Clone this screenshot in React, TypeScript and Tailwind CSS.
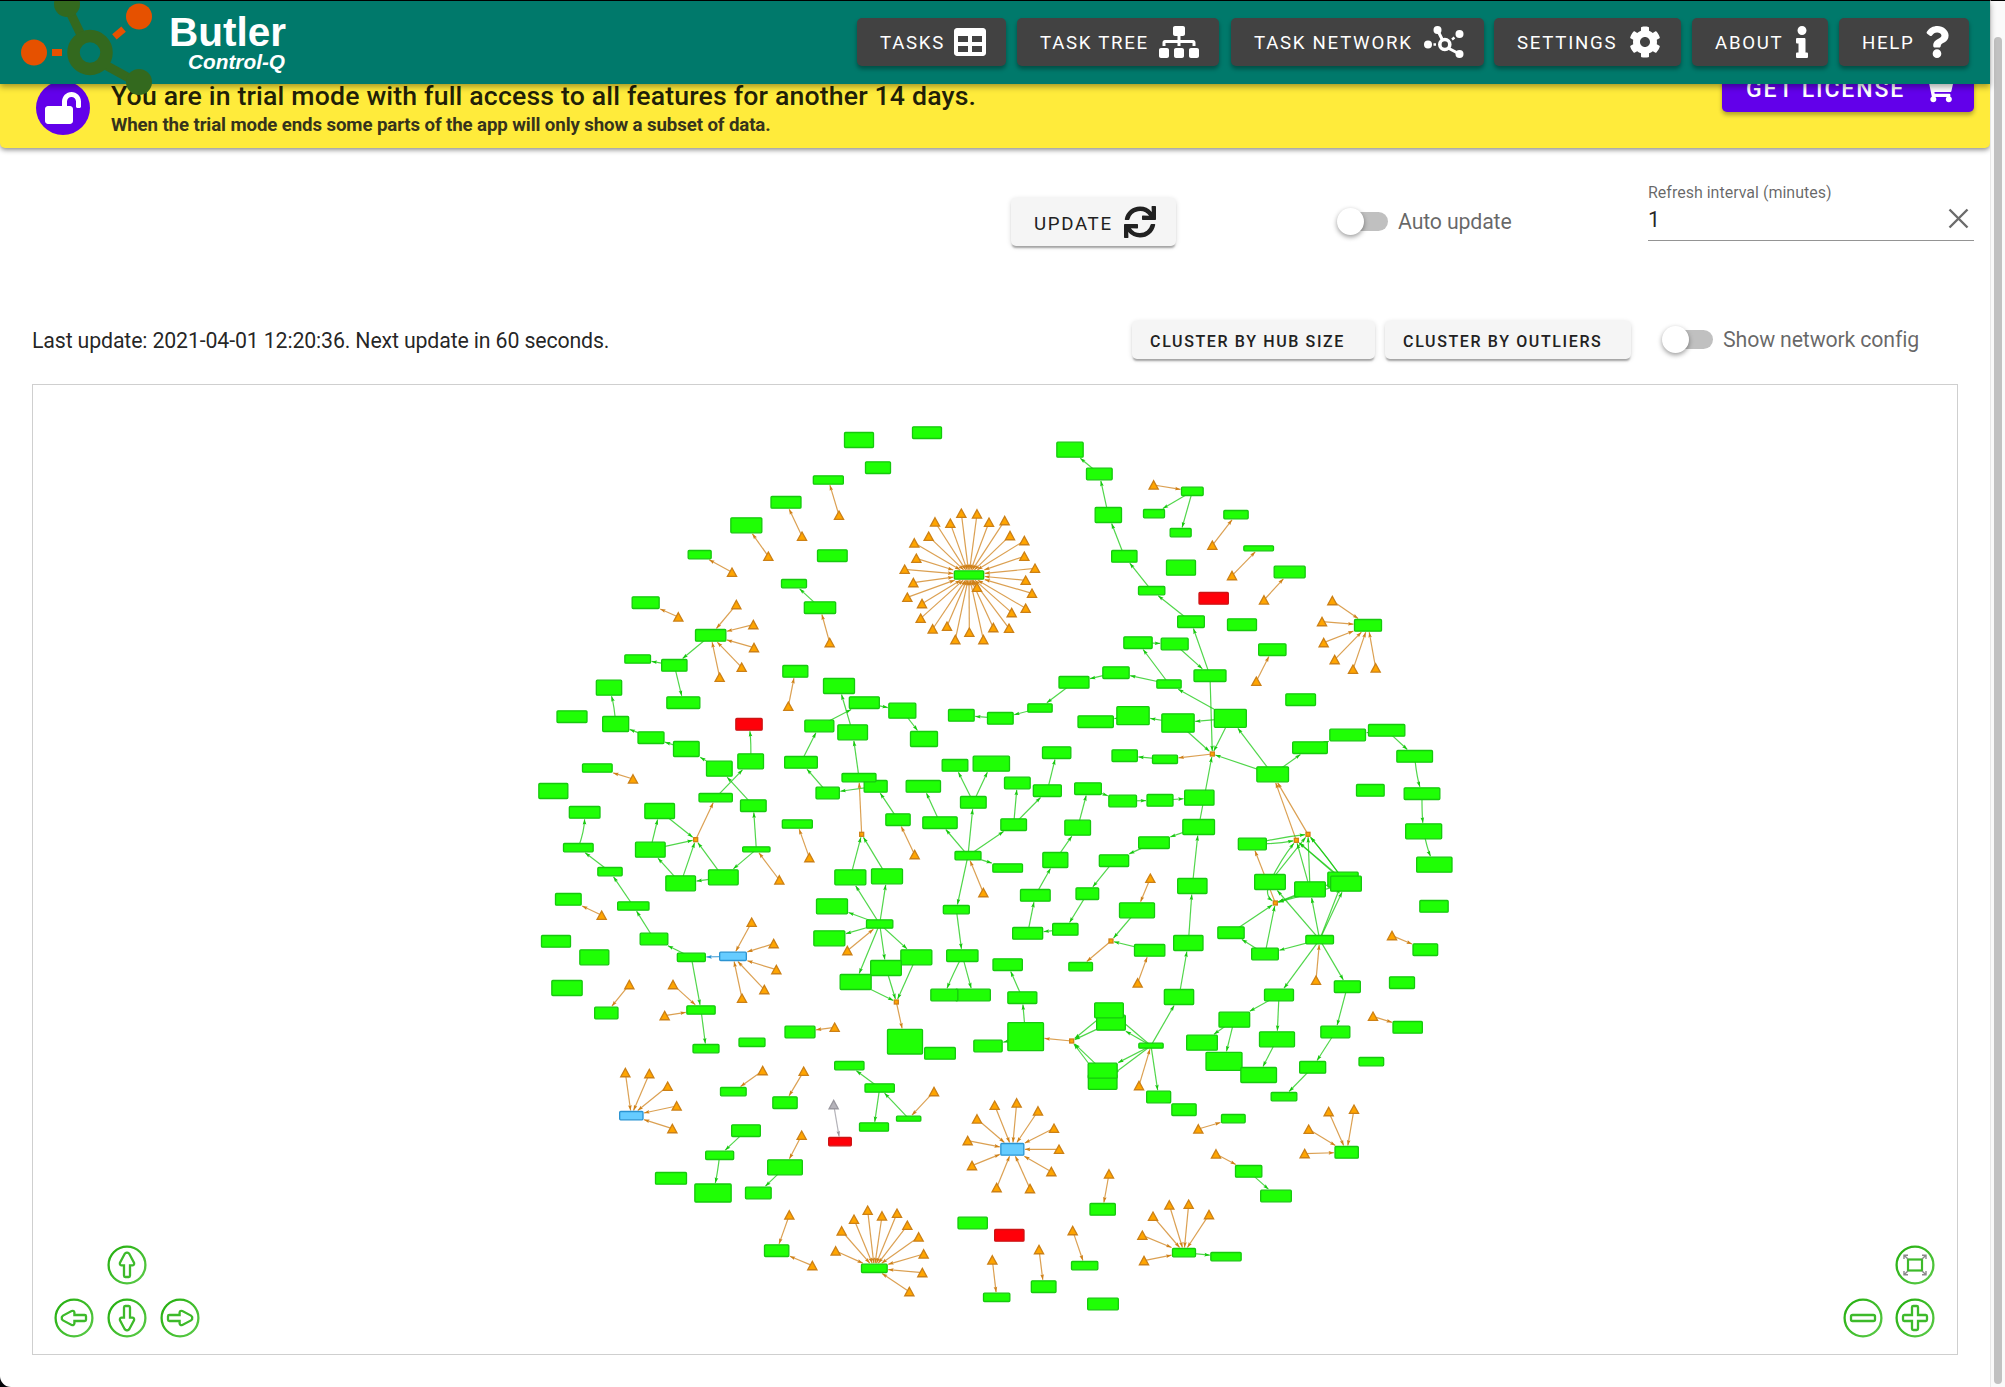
import React from "react";
import {
  FaTable,
  FaSitemap,
  FaCog,
  FaInfo,
  FaQuestion,
  FaSync,
  FaShoppingCart,
  FaLockOpen,
} from "react-icons/fa";

/* ---------- Task network data ----------
   The canvas is divided into tiles. Positions inside a tile are stored in
   thirds of a pixel, relative to the tile's own origin. */

type Kind = "ok" | "fail" | "link";
type Rect = [id: string, x: number, y: number, w: number, h: number, kind?: Kind];
type Trigger = [target: string, ...points: number[]];
interface Tile {
  ox: number;
  oy: number;
  rects: Rect[];
  joints?: [string, number, number][];
  triggers: Trigger[];
}

const TILES: Tile[] = [
  {
    ox: 520,
    oy: 400,
    rects: [
      ["a1", 1017, 120, 90, 48], ["a2", 1074, 203, 78, 38], ["a3", 925, 240, 93, 28], ["a4", 798, 307, 93, 38],
      ["a5", 679, 376, 96, 48], ["a6", 539, 464, 72, 28], ["a7", 937, 467, 92, 38], ["a8", 822, 551, 78, 28],
      ["a9", 900, 623, 97, 38], ["a10", 377, 608, 84, 38], ["a11", 572, 706, 94, 38], ["a12", 353, 777, 80, 28],
      ["a13", 463, 796, 79, 38], ["a14", 490, 908, 102, 38], ["a15", 267, 863, 79, 48], ["a16", 156, 950, 93, 38],
      ["a17", 287, 972, 81, 48], ["a18", 393, 1013, 81, 38], ["a19", 499, 1047, 80, 48],
      ["a20", 687, 973, 82, 38, "fail"], ["a21", 826, 814, 78, 38], ["a22", 957, 858, 96, 48],
      ["a23", 1033, 908, 93, 38], ["a24", 1147, 932, 84, 48], ["a25", 898, 978, 90, 38], ["a26", 998, 997, 92, 48],
    ],
    triggers: [
      ["a3", 957, 346], ["a4", 846, 409], ["a5", 745, 469], ["a6", 636, 517], ["a10", 475, 651], ["a9", 929, 728],
      ["a11", 649, 614, 700, 674, 702, 743, 665, 802, 599, 832], ["a21", 805, 919],
    ],
  },
  {
    ox: 880,
    oy: 400,
    rects: [
      ["b0", 141, 98, 90, 38], ["b1", 132, 1017, 84, 48], ["b2", 570, 149, 82, 48], ["b3", 658, 222, 80, 38],
      ["b4", 685, 345, 82, 48], ["b5", 733, 469, 79, 38], ["b6", 815, 572, 82, 28], ["b7", 933, 665, 83, 38],
      ["b8", 990, 827, 99, 38], ["b9", 774, 728, 88, 38], ["b10", 884, 732, 84, 38], ["b11", 867, 852, 76, 28],
      ["b12", 708, 818, 82, 38], ["b13", 582, 847, 93, 38], ["b14", 480, 924, 76, 28], ["b15", 361, 955, 80, 38],
      ["b16", 244, 946, 80, 38], ["b17", 647, 965, 109, 38], ["b18", 759, 947, 100, 57], ["b19", 894, 969, 100, 58],
      ["b20", 1051, 955, 99, 57], ["b21", 937, 274, 68, 28], ["b22", 822, 341, 66, 28], ["b23", 902, 398, 66, 28],
      ["b24", 1068, 344, 76, 28], ["b25", 1136, 445, 92, 18], ["b26", 903, 503, 90, 48],
      ["b27", 1001, 595, 91, 38, "fail"], ["b28", 1086, 674, 90, 38], ["b30", 267, 525, 91, 28],
    ],
    joints: [["j1", 997, 1062]],
    triggers: [
      ["b21", 821, 255], ["b24", 997, 436], ["b25", 1056, 527], ["c1", 1152, 600], ["c4", 1129, 844],
      ["b30", 244, 340, 291, 342, 165, 366, 211, 370, 327, 367, 374, 362, 146, 409, 390, 407, 103, 429, 433, 422,
        109, 475, 433, 469, 74, 508, 465, 505, 100, 548, 437, 541, 82, 592, 456, 580, 126, 611, 437, 625, 122, 655,
        395, 638, 158, 687, 201, 679, 340, 683, 387, 685, 226, 719, 268, 697, 310, 719, 291, 562],
    ],
  },
  {
    ox: 1080,
    oy: 420,
    rects: [
      ["c1", 629, 456, 96, 38], ["c2", 864, 616, 84, 38], ["c4", 577, 689, 85, 38], ["c5", 662, 839, 92, 38],
      ["c6", 690, 983, 107, 38], ["c7", 803, 945, 110, 38], ["c8", 920, 931, 112, 38], ["c9", 1004, 1009, 110, 38],
      ["c10", 578, 1063, 98, 48],
    ],
    triggers: [["c2", 757, 542, 726, 605, 731, 668, 764, 719, 819, 748, 887, 744]],
  },
  {
    ox: 520,
    oy: 740,
    rects: [
      ["d1", 598, 86, 80, 48], ["d2", 692, 64, 80, 48], ["d3", 587, 173, 103, 28], ["d4", 700, 197, 80, 38],
      ["d5", 419, 213, 92, 48], ["d6", 391, 329, 92, 48], ["d7", 482, 430, 92, 48], ["d8", 610, 412, 92, 48],
      ["d9", 709, 328, 85, 18], ["d10", 232, 84, 92, 28], ["d11", 100, 153, 90, 48], ["d12", 194, 217, 95, 38],
      ["d13", 175, 323, 92, 28], ["d14", 270, 395, 76, 28], ["d15", 340, 498, 97, 28], ["d16", 402, 597, 86, 38],
      ["d17", 514, 652, 87, 28], ["d18", 639, 649, 83, 28, "link"], ["d19", 543, 810, 88, 28],
      ["d20", 558, 926, 81, 28], ["d21", 145, 478, 80, 38], ["d22", 108, 604, 90, 38], ["d23", 223, 652, 90, 48],
      ["d24", 141, 744, 94, 48], ["d25", 259, 819, 73, 38], ["d26", 832, 252, 93, 28], ["d27", 843, 67, 101, 38],
      ["d28", 923, 159, 73, 38], ["d30", 1067, 139, 72, 38], ["d29", 1017, 113, 105, 28], ["d31", 1134, 239, 76, 38],
      ["d32", 991, 412, 96, 48], ["d33", 1101, 409, 96, 48], ["d34", 936, 499, 96, 48], ["d35", 928, 595, 96, 48],
      ["d36", 1079, 552, 82, 28], ["d37", 1189, 652, 96, 48], ["d38", 1098, 684, 95, 48], ["d39", 1007, 726, 96, 48],
      ["d40", 1155, 905, 108, 77], ["d41", 840, 876, 93, 38], ["d42", 696, 907, 81, 28], ["d43", 988, 977, 91, 28],
      ["d44", 1079, 1044, 91, 28], ["d45", 640, 1055, 80, 28],
    ],
    joints: [["jd1", 527, 299], ["jd2", 1025, 283], ["jd3", 1129, 786]],
    triggers: [
      ["d10", 339, 117], ["d26", 868, 353], ["d31", 1184, 344], ["d9", 778, 420], ["d21", 245, 526],
      ["d18", 695, 547, 761, 611, 769, 689, 733, 749, 666, 775], ["d25", 328, 734], ["d19", 459, 734, 434, 827],
      ["d41", 944, 862], ["d36", 982, 632], ["d45", 728, 992], ["g2", 851, 994],
    ],
  },
  {
    ox: 880,
    oy: 740,
    rects: [
      ["e0", 530, 38, 88, 38], ["e1", 225, 76, 80, 38], ["e2", 334, 71, 112, 48], ["e3", 130, 139, 106, 38],
      ["e4", 280, 187, 80, 38], ["e5", 412, 129, 80, 38], ["e6", 502, 152, 87, 38], ["e7", 180, 248, 106, 38],
      ["e8", 401, 254, 80, 38], ["e9", 264, 347, 81, 28], ["e10", 383, 384, 92, 28], ["e11", 229, 509, 81, 28],
      ["e12", 247, 647, 97, 38], ["e14", 279, 765, 107, 38], ["e13", 193, 765, 84, 38], ["e15", 383, 674, 91, 38],
      ["e16", 427, 773, 90, 38], ["e17", 437, 890, 110, 87], ["e18", 324, 918, 88, 38], ["e19", 180, 940, 95, 38],
      ["e20", 624, 146, 83, 38], ["e21", 728, 183, 86, 38], ["e22", 840, 181, 81, 38], ["e23", 958, 173, 91, 48],
      ["e24", 956, 261, 98, 48], ["e25", 822, 308, 95, 38], ["e26", 702, 362, 91, 38], ["e27", 622, 461, 71, 38],
      ["e28", 556, 568, 79, 38], ["e29", 443, 580, 93, 38], ["e30", 466, 466, 92, 38], ["e31", 526, 360, 78, 48],
      ["e32", 593, 263, 80, 48], ["e33", 937, 438, 91, 48], ["e34", 925, 609, 91, 48], ["e35", 897, 771, 91, 48],
      ["e36", 771, 511, 108, 48], ["e37", 809, 631, 94, 38], ["e38", 602, 680, 74, 28], ["e39", 693, 848, 89, 48],
      ["e40", 687, 811, 89, 48], ["e41", 668, 1026, 89, 47], ["e42", 668, 992, 90, 48], ["e43", 813, 917, 76, 18],
      ["e50", 734, 47, 79, 38], ["e51", 855, 58, 78, 28],
    ],
    joints: [["je1", 693, 603], ["je2", 575, 903]],
    triggers: [["e9", 310, 458], ["e36", 811, 415], ["e37", 773, 729], ["e43", 777, 1037]],
  },
  {
    ox: 1160,
    oy: 740,
    rects: [
      ["f2", 786, 161, 110, 38], ["f3", 791, 274, 111, 48], ["f4", 823, 374, 109, 48], ["f5", 822, 499, 88, 38],
      ["f6", 631, 151, 86, 38], ["f7", 277, 312, 87, 38], ["f8", 330, 426, 95, 48], ["f9", 450, 448, 95, 48],
      ["f10", 549, 419, 94, 48], ["f11", 558, 431, 95, 48], ["f12", 213, 578, 82, 38], ["f13", 315, 642, 83, 38],
      ["f14", 479, 599, 86, 28], ["f15", 357, 765, 90, 38], ["f16", 562, 740, 81, 38], ["f17", 223, 839, 95, 48],
      ["f18", 126, 908, 95, 48], ["f19", 192, 964, 111, 57], ["f20", 351, 898, 108, 48], ["f21", 296, 1005, 110, 48],
      ["f22", 526, 876, 90, 38], ["f23", 458, 982, 81, 38], ["f24", 372, 1070, 80, 28], ["f25", 796, 629, 77, 38],
      ["f26", 726, 728, 78, 38], ["f27", 743, 862, 91, 38], ["f28", 634, 965, 77, 28],
    ],
    joints: [["jf1", 409, 301], ["jf2", 444, 283], ["jf3", 346, 489]],
    triggers: [["f25", 696, 587], ["f27", 639, 829], ["f14", 468, 721]],
  },
  {
    ox: 540,
    oy: 1040,
    rects: [
      ["g1", 274, 227, 73, 28, "link"], ["g2", 735, 188, 76, 38], ["g3", 618, 272, 89, 38], ["g4", 539, 346, 87, 28],
      ["g5", 519, 459, 112, 57], ["g6", 393, 415, 96, 38], ["g7", 735, 382, 107, 48], ["g8", 655, 459, 80, 38],
      ["g9", 900, 305, 71, 28, "fail"], ["g10", 1002, 261, 90, 28], ["g11", 1106, 236, 76, 18],
      ["g12", 710, 632, 76, 38], ["g13", 1003, 685, 80, 28], ["g14", 1298, 549, 91, 38],
    ],
    triggers: [
      ["g1", 256, 98, 328, 101, 383, 139, 410, 198, 397, 266], ["g7", 785, 286], ["g11", 1182, 155],
      ["g12", 748, 525, 817, 677], ["g9", 881, 194],
      ["g13", 887, 633, 905, 573, 942, 538, 983, 511, 1026, 528, 1071, 520, 1102, 556, 1136, 591, 1151, 642, 1147, 698,
        1108, 755],
    ],
  },
  {
    ox: 940,
    oy: 1040,
    rects: [
      ["h1", 656, 171, 75, 38], ["h2", 732, 209, 76, 38], ["h3", 217, 328, 72, 38, "link"],
      ["h5", 208, 586, 91, 38, "fail"], ["h6", 170, 772, 82, 28], ["h7", 311, 740, 77, 38], ["h8", 434, 677, 82, 28],
      ["h9", 488, 508, 79, 38], ["h10", 489, 792, 95, 38], ["h11", 732, 638, 72, 28], ["h12", 858, 650, 94, 28],
      ["h13", 880, 236, 74, 28], ["h14", 926, 394, 82, 38], ["h15", 1008, 468, 95, 38], ["h16", 1220, 337, 73, 38],
    ],
    triggers: [
      ["h3", 164, 196, 230, 189, 294, 213, 111, 237, 342, 265, 83, 302, 357, 328, 96, 377, 334, 395, 170, 443, 270,
        446],
      ["h6", 157, 660], ["h7", 297, 629], ["h8", 398, 572], ["h9", 507, 402],
      ["h11", 639, 529, 688, 495, 746, 493, 807, 524, 607, 586, 612, 662], ["h13", 775, 267], ["h14", 828, 342],
      ["h16", 1166, 215, 1242, 208, 1106, 268, 1094, 341],
    ],
  },
];

const LINKS = `
a9>a8 a11>a13 a13>a12 a13>a14 a17>a15 a18>a17 a19>a18 d1>a19 d2>a20 a25>a23 a23>a24 a24>b1 a26>a22 d27>a25 d29>a26
b3>b2 b4>b3 b5>b4 b6>b5 b7>b6 b8>b7 b9>b10 b10>b8 b11>b9 b11>b12 b12>b13 b13>b14 b14>b15 b15>b16 b20>b11 b20>b19
b19>b18 b18>b17 b20>j1 b19>j1 b8>j1 b21>b22 b21>b23 j1>e51 e51>e50 c10>b20 c10>j1 c10>c6 c6>c7 c8>c7 c8>c9 c9>f2
d4>d1 d3>d2 jd1>d3 d5>jd1 d6>jd1 d7>jd1 d8>jd1 d6>d5 d7>d6 d8>d7 d9>d8 d9>d4 d13>d12 d14>d13 d15>d14 d16>d15 d17>d16
d18>d17 d17>d19 d19>d20 d28>d27 d30>d28 d31>d30 jd2>d29 d32>jd2 d33>jd2 d36>d32 d36>d33 d36>d34 d36>d35 d36>d37
d36>d38 d36>d39 d37>jd3 d38>jd3 d39>jd3 jd3>d40 d44>d43 d44>g10 g11>d44
e4>e1 e4>e2 e7>e3 e8>e5 e8>e6 e6>e0 e9>e4 e9>e7 e9>e8 e9>e10 e9>e11 e11>e12 e12>e13 e12>e14 e16>e15 e17>e16 e17>e18
e20>e21 e21>e22 e22>e23 e24>j1 e24>e25 e25>e26 e26>e27 e27>e28 e28>e29 e29>e30 e30>e31 e31>e32 e32>e20 e33>e24
e34>e33 e35>e34 e43>e35 e36>je1 e37>je1 je1>e38 e40>je2 e39>je2 e41>je2 e42>je2 je2>e17 e43>e39 e43>e40 e43>e41
e43>e42 e43>h1 h1>h2
f2>f3 f3>f4 jf1>c10 jf2>c10 jf3>f7 f7>jf1 f7>jf2 f8>jf1 f8>jf2 f9>jf1 f9>jf2 f10>jf1 f10>jf2 f11>jf1 f11>jf2
f9>jf3 f10>jf3 f11>jf3 f12>jf3 f13>jf3 f8>jf3 f13>f12 f14>f13 f14>f8 f14>f9 f14>f10 f14>f11 f14>f15 f14>f16 f15>f17
f15>f20 f17>f18 f17>f19 f20>f21 f16>f22 f22>f23 f23>f24 g3>g4 g4>g5 g7>g8 h14>h15 h11>h12`
  .trim()
  .split(/\s+/)
  .map((l) => l.split(">"));

/* Sideways bend of the edges that are not straight, in pixels. */
const BENDS: Record<string, number> = {
  "d2>a20": 1.5,
  "d13>d12": 3,
  "a17>a15": 2,
  "c9>f2": 2,
  "f2>f3": 1,
  "f3>f4": 2,
  "e12>e13": 1,
  "f8>jf3": 9,
  "f8>jf1": -3,
  "f7>jf2": -2,
  "f7>jf1": 2,
  "f10>jf2": 1.5,
  "f11>jf2": 1.5,
  "g4>g5": -1,
};

interface Box {
  x: number;
  y: number;
  w: number;
  h: number;
  kind: Kind | "joint";
}
interface Tri {
  x: number;
  y: number;
  target: string;
}

const boxes: Record<string, Box> = {};
const tris: Tri[] = [];
TILES.forEach((t) => {
  t.rects.forEach(([id, x, y, w, h, kind]) => {
    boxes[id] = { x: t.ox + x / 3, y: t.oy + y / 3, w: w / 3, h: h / 3, kind: kind ?? "ok" };
  });
  t.joints?.forEach(([id, x, y]) => {
    boxes[id] = { x: t.ox + x / 3, y: t.oy + y / 3, w: 5, h: 5, kind: "joint" };
  });
  t.triggers.forEach(([target, ...p]) => {
    for (let i = 0; i < p.length; i += 2) {
      tris.push({ target, x: t.ox + p[i] / 3, y: t.oy + p[i + 1] / 3 });
    }
  });
});

const FILL = { ok: "#1fff05", fail: "#ff0009", link: "#66ccff", joint: "#ffa500" };
const LINE = { ok: "#16c80e", fail: "#cc1414", link: "#2b93d1", joint: "#cf8018" };

function Edge({ sx, sy, to, color, bend = 0 }: { sx: number; sy: number; to: Box; color: string; bend?: number }) {
  const len = Math.hypot(sx - to.x, sy - to.y) || 1;
  const mx = (sx + to.x) / 2 + ((to.y - sy) / len) * -bend;
  const my = (sy + to.y) / 2 + ((to.x - sx) / len) * bend;
  const cx = bend ? mx : sx;
  const cy = bend ? my : sy;
  const dx = cx - to.x;
  const dy = cy - to.y;
  const k = Math.min(
    dx ? (to.w / 2 + 0.5) / Math.abs(dx) : Infinity,
    dy ? (to.h / 2 + 0.5) / Math.abs(dy) : Infinity,
  );
  const tx = to.x + dx * k;
  const ty = to.y + dy * k;
  const a = (Math.atan2(-dy, -dx) * 180) / Math.PI;
  return (
    <g>
      <path
        d={bend ? `M${sx} ${sy}Q${mx} ${my} ${tx} ${ty}` : `M${sx} ${sy}L${tx} ${ty}`}
        stroke={color}
        strokeOpacity={0.75}
        strokeWidth={1.2}
        fill="none"
      />
      <path d="M0 0L-5.4 -1.8L-4.5 0L-5.4 1.8Z" fill={color} transform={`translate(${tx} ${ty}) rotate(${a})`} />
    </g>
  );
}

function NetworkGraph() {
  return (
    <svg className="block" width={1924} height={968} viewBox="33 385 1924 968">
      {LINKS.map(([s, t]) => (
        <Edge
          key={s + t}
          sx={boxes[s].x}
          sy={boxes[s].y}
          to={boxes[t]}
          color={LINE[boxes[s].kind]}
          bend={BENDS[`${s}>${t}`]}
        />
      ))}
      {tris.map((t, i) => (
        <Edge key={i} sx={t.x} sy={t.y} to={boxes[t.target]} color={t.target === "g9" ? "#9a98a0" : LINE.joint} />
      ))}
      {Object.entries(boxes).map(([id, b]) => (
        <rect
          key={id}
          x={b.x - b.w / 2 + 0.5}
          y={b.y - b.h / 2 + 0.5}
          width={b.w - 1}
          height={b.h - 1}
          rx={b.kind === "joint" ? 0 : 1}
          fill={FILL[b.kind]}
          stroke={LINE[b.kind]}
          strokeWidth={1.3}
        />
      ))}
      {tris.map((t, i) => (
        <path
          key={i}
          d={`M${t.x} ${t.y - 4.3}L${t.x + 4.6} ${t.y + 4.1}H${t.x - 4.6}Z`}
          fill={t.target === "g9" ? "#b5b3ba" : "#ffa500"}
          stroke={t.target === "g9" ? "#9a98a0" : "#cc8016"}
          strokeWidth={1.3}
        />
      ))}
    </svg>
  );
}

/* ---------- Chrome ---------- */

function ButlerLogo() {
  return (
    <svg className="absolute left-0 top-0" width={160} height={98} viewBox="0 0 160 98">
      <g stroke="#33691e" fill="none">
        <path d="M67 5L83 38" strokeWidth={9} />
        <path d="M98 60L138 82" strokeWidth={9} />
        <circle cx={90} cy={51.5} r={16.5} strokeWidth={12.5} />
      </g>
      <circle cx={67} cy={3} r={13} fill="#33691e" />
      <circle cx={139} cy={81} r={13} fill="#33691e" />
      <g fill="#e65100">
        <circle cx={34} cy={51.5} r={13} />
        <circle cx={139} cy={15.5} r={13} />
        <rect x={52} y={48} width={10} height={7} />
        <rect x={-6} y={-3.5} width={12} height={7} transform="translate(119 32) rotate(-40)" />
      </g>
    </svg>
  );
}

function HubIcon() {
  return (
    <svg width={40} height={32} viewBox="0 0 40 32" fill="#fff" stroke="#fff">
      <g stroke="none">
        <circle cx={4} cy={18.5} r={4} />
        <circle cx={13.5} cy={4} r={4} />
        <circle cx={35.5} cy={8} r={4} />
        <circle cx={35.5} cy={28} r={4} />
      </g>
      <path d="M13.5 4L18.5 14M24 22L35.5 28" strokeWidth={3} />
      <path d="M9.5 18.5H12M28 13.5L30.5 11.5" strokeWidth={2.4} />
      <circle cx={20.8} cy={18.5} r={5} strokeWidth={3.6} fill="none" />
    </svg>
  );
}

function NavButton({ label, width, children }: { label: string; width: string; children: React.ReactNode }) {
  return (
    <button
      className={`flex h-12 items-center justify-between rounded-[5px] bg-[#424242] pl-[23px] pr-5 text-[18.67px] tracking-[1.72px] text-white shadow-[0_3px_4px_rgba(0,0,0,0.35)] ${width}`}
    >
      <span className="whitespace-nowrap pt-[2px]">{label}</span>
      {children}
    </button>
  );
}

function Header() {
  return (
    <header className="relative z-10 h-[84px] border-t border-black bg-[#00796b] shadow-[0_3px_6px_rgba(0,0,0,0.35)]">
      <div className="flex items-start justify-between pr-[21px]">
        <div className="relative h-[83px] w-[290px]">
          <div className="absolute left-0 top-0 h-[98px] w-40 overflow-hidden">
            <ButlerLogo />
          </div>
          <div className="ml-[169px] pt-[8px] font-['Liberation_Sans'] font-bold text-white">
            <div className="text-[40.5px] leading-[46px]">Butler</div>
            <div className="-mt-[5px] ml-[19px] text-[20.8px] italic leading-[24px]">Control-Q</div>
          </div>
        </div>
        <nav className="flex pt-[17px]">
          <NavButton label="TASKS" width="w-[149px] mr-[11px]"><FaTable size={32} /></NavButton>
          <NavButton label="TASK TREE" width="w-[202px] mr-[12px]"><FaSitemap size={32} className="w-10" /></NavButton>
          <NavButton label="TASK NETWORK" width="w-[253px] mr-[10px]"><HubIcon /></NavButton>
          <NavButton label="SETTINGS" width="w-[187px] mr-[11px]"><FaCog size={32} /></NavButton>
          <NavButton label="ABOUT" width="w-[136px] mr-[11px]"><FaInfo size={32} className="w-3" /></NavButton>
          <NavButton label="HELP" width="w-[130px]"><FaQuestion size={32} className="w-6" /></NavButton>
        </nav>
      </div>
    </header>
  );
}

function TrialBanner() {
  return (
    <section className="-mt-6 flex h-[88px] rounded-[5px] bg-[#ffeb3b] pl-[36px] pr-4 shadow-[0_2px_5px_rgba(0,0,0,0.45)]">
      <div className="mt-[21px] flex size-[54px] items-center justify-center rounded-full bg-[#6200ea] text-white">
        <FaLockOpen size={32} className="w-9" />
      </div>
      <div className="ml-[21px] pt-[20px] whitespace-nowrap">
        <div className="text-[26.67px] font-medium leading-[32px] text-[#211f08] tracking-[0.16px]">
          You are in trial mode with full access to all features for another 14 days.
        </div>
        <div className="mt-[1px] text-[18.67px] font-bold leading-[24px] text-[#36331b] tracking-[-0.11px]">
          When the trial mode ends some parts of the app will only show a subset of data.
        </div>
      </div>
      <button className="ml-auto flex h-[52px] w-[252px] items-end justify-between rounded-[5px] bg-[#6200ea] pb-[8px] pl-6 pr-[20px] text-[23px] font-medium tracking-[1.9px] text-white shadow-[0_3px_4px_rgba(0,0,0,0.3)]">
        <span className="leading-[29px]">GET LICENSE</span>
        <FaShoppingCart size={31} />
      </button>
    </section>
  );
}

function Toggle({ label }: { label: string }) {
  return (
    <label className="flex items-center gap-[10px] text-[21.33px] text-black/60">
      <span className="relative flex h-[27px] w-[51px] items-center justify-end">
        <span className="h-[19px] w-[45px] rounded-full bg-[#c0c0c0]" />
        <span className="absolute left-0 top-0 size-[27px] rounded-full bg-white shadow-[0_2px_5px_rgba(0,0,0,0.4)]" />
      </span>
      <span className="whitespace-nowrap tracking-[-0.17px]">{label}</span>
    </label>
  );
}

const LIGHT_BUTTON =
  "flex items-center rounded-[5px] bg-[#f5f5f5] text-[#212121] whitespace-nowrap shadow-[0_3px_2px_-1px_rgba(0,0,0,0.3),0_1px_5px_rgba(0,0,0,0.15)]";

function Controls() {
  return (
    <>
      <div className="flex h-[148px] items-center justify-end pr-4">
        <button className={`${LIGHT_BUTTON} h-12 w-[165px] justify-between pl-[23px] pr-5 text-[18.67px] tracking-[1.667px]`}>
          <span className="pt-[3px]">UPDATE</span>
          <FaSync size={32} />
        </button>
        <div className="ml-[161px] w-[311px]">
          <Toggle label="Auto update" />
        </div>
        <div className="mb-[22px] mt-[2px] flex h-[58px] w-[326px] flex-col justify-between border-b border-[#949494]">
          <span className="text-base leading-[20px] text-black/60">Refresh interval (minutes)</span>
          <div className="flex items-center justify-between pb-[7px] pr-[5px]">
            <span className="text-[21.33px] leading-[26px] text-black/87">1</span>
            <svg className="-mt-[3px]" width={21} height={21} viewBox="0 0 21 21" stroke="#6b6b6b" strokeWidth={2.4}>
              <path d="M1.5 1.5L19.5 19.5M19.5 1.5L1.5 19.5" />
            </svg>
          </div>
        </div>
      </div>
      <div className="flex h-[88px] items-center pl-8 pr-[71px]">
        <p className="pt-[2px] text-[21.33px] tracking-[-0.155px] text-black/87">
          Last update: 2021-04-01 12:20:36. Next update in 60 seconds.
        </p>
        <button className={`${LIGHT_BUTTON} ml-auto h-[38px] w-[243px] pl-[18px] pt-[3px] text-base tracking-[1.63px] font-medium`}>
          CLUSTER BY HUB SIZE
        </button>
        <button className={`${LIGHT_BUTTON} ml-[10px] mr-[31px] h-[38px] w-[246px] pl-[18px] pt-[3px] text-base tracking-[1.63px] font-medium`}>
          CLUSTER BY OUTLIERS
        </button>
        <Toggle label="Show network config" />
      </div>
    </>
  );
}

const ARROW = "M0 -12.2Q1.2 -12.6 2.4 -11L7 -2.4Q7.6 0 5.6 .4H3V10.6Q3 12 1.8 12H-1.8Q-3 12 -3 10.6V.4H-5.6Q-7.6 0 -7 -2.4L-2.4 -11Q-1.2 -12.6 0 -12.2Z";
const PLUS = "M-3 -10.8Q-3 -12 -1.6 -12H1.6Q3 -12 3 -10.8V-3H10.8Q12 -3 12 -1.6V1.6Q12 3 10.8 3H3V10.8Q3 12 1.6 12H-1.6Q-3 12 -3 10.8V3H-10.8Q-12 3 -12 1.6V-1.6Q-12 -3 -10.8 -3H-3Z";

function RoundIcon({ children }: { children: React.ReactNode }) {
  return (
    <svg className="size-10" viewBox="-20 -20 40 40" fill="none">
      <defs>
        <linearGradient id="vivid" x1="0" y1="0" x2="1" y2="1">
          <stop offset="0" stopColor="#22ae0c" />
          <stop offset="1" stopColor="#5ccb4a" />
        </linearGradient>
      </defs>
      <circle r={18.4} stroke="url(#vivid)" strokeWidth={2.3} />
      {children}
    </svg>
  );
}

function ArrowIcon({ angle }: { angle: number }) {
  return (
    <RoundIcon>
      <path d={ARROW} stroke="#3dba2a" strokeWidth={2.3} transform={`rotate(${angle})`} />
    </RoundIcon>
  );
}

function PanControls() {
  return (
    <div className="absolute bottom-[16px] left-[21.3px] grid grid-cols-[53px_52.5px_40px] grid-rows-[53px_40px]">
      <span />
      <ArrowIcon angle={0} />
      <span />
      <ArrowIcon angle={-90} />
      <ArrowIcon angle={180} />
      <ArrowIcon angle={90} />
    </div>
  );
}

function ZoomControls() {
  return (
    <div className="absolute bottom-[16px] right-[22.5px] grid grid-cols-[52px_40px] grid-rows-[53px_40px]">
      <span />
      <RoundIcon>
        <rect x={-7} y={-5.5} width={14} height={11} stroke="#3dba2a" strokeWidth={2.2} />
        <path
          d="M-7 -6L-11 -9.7M-11 -6V-9.7H-7M7 -6L11 -9.7M11 -6V-9.7H7M-7 6L-11 9.7M-11 6V9.7H-7M7 6L11 9.7M11 6V9.7H7"
          stroke="#8a8a8a"
          strokeWidth={1.4}
        />
      </RoundIcon>
      <RoundIcon>
        <rect x={-12} y={-3} width={24} height={6} rx={1.6} stroke="#3dba2a" strokeWidth={2.3} />
      </RoundIcon>
      <RoundIcon>
        <path d={PLUS} stroke="#3dba2a" strokeWidth={2.3} />
      </RoundIcon>
    </div>
  );
}

export default function App() {
  return (
    <div className="h-[1387px] w-[2005px] overflow-hidden bg-[#05060a] font-[Roboto,sans-serif]">
      <div className="flex h-full overflow-hidden rounded-bl-[11px] bg-white">
        <div className="w-[1990px]">
          <Header />
          <TrialBanner />
          <Controls />
          <main className="relative ml-8 h-[971px] w-[1926px] border border-[#cfcfcf]">
            <NetworkGraph />
            <PanControls />
            <ZoomControls />
          </main>
        </div>
        <div className="flex w-[15px] justify-center border-l border-t border-l-[#e8e8e8] border-t-black bg-[#fafafa] pt-9">
          <div className="h-[1347px] w-2 rounded-full bg-[#c1c1c1]" />
        </div>
      </div>
    </div>
  );
}
